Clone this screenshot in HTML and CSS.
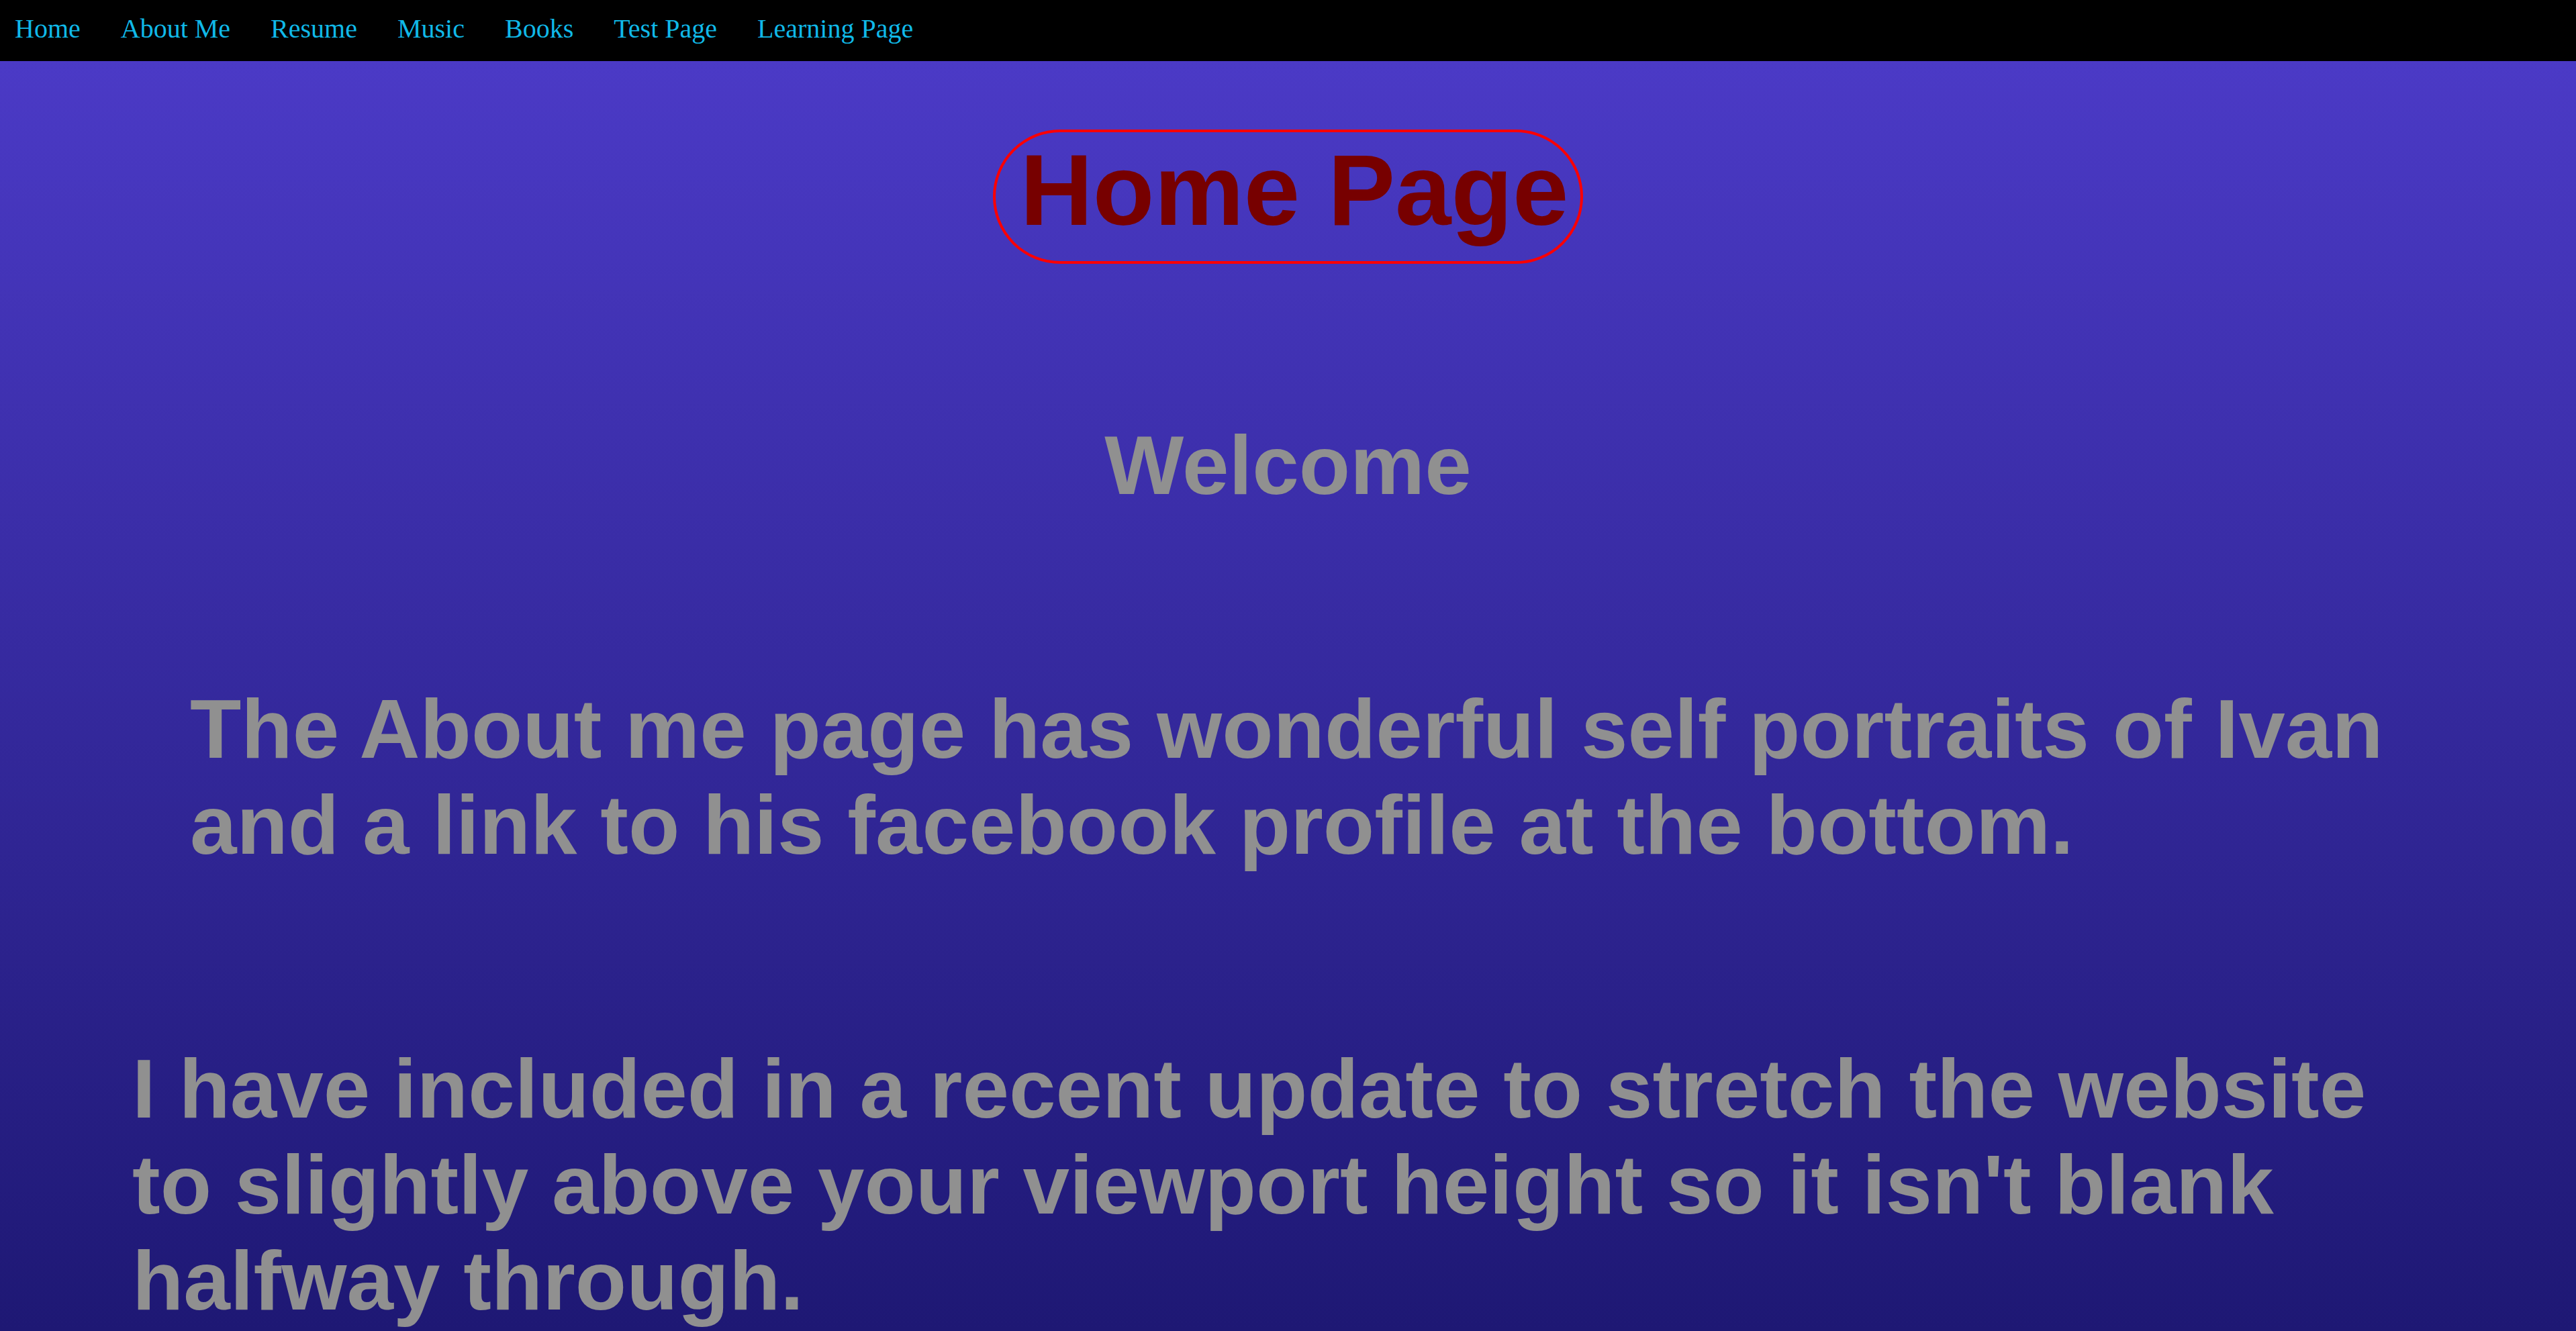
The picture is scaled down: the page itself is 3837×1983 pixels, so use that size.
FILE: index.html
```html
<!DOCTYPE html>
<html lang="en">
<head>
<meta charset="utf-8">
<title>Home Page</title>
<link rel="stylesheet" href="styles.css">
</head>
<body>
<nav class="topnav">
  <a class="navlink" href="#">Home</a>
  <a class="navlink" href="#">About Me</a>
  <a class="navlink" href="#">Resume</a>
  <a class="navlink" href="#">Music</a>
  <a class="navlink" href="#">Books</a>
  <a class="navlink" href="#">Test Page</a>
  <a class="navlink" href="#">Learning Page</a>
</nav>
<main class="content">
  <h1 class="title">Home Page</h1>
  <h2 class="welcome">Welcome</h2>
  <p class="blurb blurb-about">The About me page has wonderful self portraits of Ivan and a link to his facebook profile at the bottom.</p>
  <p class="blurb blurb-update">I have included in a recent update to stretch the website to slightly above your viewport height so it isn't blank halfway through.</p>
</main>
</body>
</html>
```

FILE: styles.css
```css
html, body {
  margin: 0;
  padding: 0;
}

body {
  background: #1e1874;
  font-family: "Liberation Sans", Arial, sans-serif;
}

.topnav {
  display: flex;
  align-items: flex-start;
  gap: 60px;
  height: 91px;
  box-sizing: border-box;
  padding: 20px 0 0 22px;
  background: #000;
}

.navlink {
  font-family: "Liberation Serif", "Times New Roman", serif;
  font-size: 40px;
  line-height: 46px;
  color: #10b9e8;
  text-decoration: none;
}

.content {
  display: flex;
  flex-direction: column;
  align-items: stretch;
  min-height: calc(100vh - 91px);
  padding-bottom: 125px;
  background: linear-gradient(to bottom, #4b3ac6 0px, #1e1874 1892px);
}

.title {
  align-self: center;
  margin: 102px 0 0 0;
  padding: 0 18px 20px 37px;
  border: 4px solid #ff0000;
  border-radius: 100px;
  font-family: "Liberation Sans", Arial, sans-serif;
  font-weight: bold;
  font-size: 150px;
  line-height: 172px;
  color: #770000;
}

.welcome {
  margin: 228px 0 0 0;
  text-align: center;
  font-size: 125px;
  font-weight: bold;
  line-height: normal;
  color: #909090;
}

.blurb {
  margin-top: 250px;
  margin-bottom: 0;
  font-size: 125px;
  font-weight: bold;
  line-height: normal;
  color: #909090;
}

.blurb-about {
  margin-left: 283px;
  margin-right: 281px;
}

.blurb-update {
  margin-left: 197px;
  margin-right: 197px;
}
```
